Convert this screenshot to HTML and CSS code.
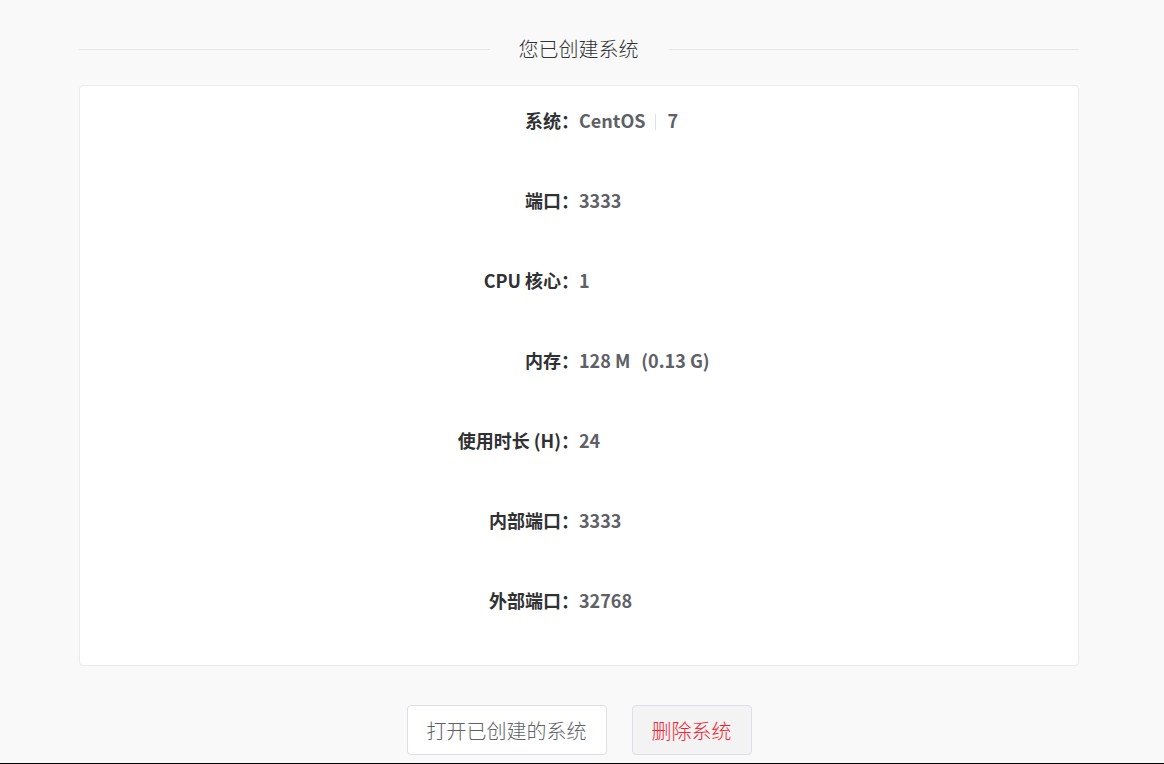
FILE: index.html
```html
<!DOCTYPE html>
<html lang="zh-CN">
<head>
  <meta charset="UTF-8">
  <title>您已创建系统</title>
  <meta name="viewport" content="width=device-width, initial-scale=1.0">
  <link rel="stylesheet" href="styles.css">
</head>
<body>
  <div class="wrap">
    <div class="title-divider">
      <span class="title-text">您已创建系统</span>
    </div>

    <div class="info-card">
      <div class="info-row">
        <span class="info-label">系统：</span>
        <span class="info-value">CentOS<i class="v-divider"></i>7</span>
      </div>
      <div class="info-row">
        <span class="info-label">端口：</span>
        <span class="info-value">3333</span>
      </div>
      <div class="info-row">
        <span class="info-label">CPU 核心：</span>
        <span class="info-value">1</span>
      </div>
      <div class="info-row">
        <span class="info-label">内存：</span>
        <span class="info-value">128 M<span class="sub-value">(0.13 G)</span></span>
      </div>
      <div class="info-row">
        <span class="info-label">使用时长 (H)：</span>
        <span class="info-value">24</span>
      </div>
      <div class="info-row">
        <span class="info-label">内部端口：</span>
        <span class="info-value">3333</span>
      </div>
      <div class="info-row">
        <span class="info-label">外部端口：</span>
        <span class="info-value">32768</span>
      </div>
    </div>

    <div class="actions">
      <button class="btn">打开已创建的系统</button>
      <button class="btn btn-danger">删除系统</button>
    </div>
  </div>
  <div class="footer"></div>
</body>
</html>
```

FILE: styles.css
```css
body {
  margin: 0;
  background-color: #f9f9f9;
  font-family: "Noto Sans CJK SC", "Noto Sans", sans-serif;
  color: #303133;
}

.wrap {
  width: 1000px;
  margin-left: 79px;
}

.title-divider {
  display: flex;
  align-items: center;
  height: 40px;
  margin: 29px 0 16px;
}

.title-divider::before,
.title-divider::after {
  content: "";
  flex: 1;
  height: 1px;
  background-color: #e6e6e6;
}

.title-text {
  padding: 0 30px 0 29px;
  font-size: 20px;
  font-weight: 300;
  line-height: 40px;
  color: #303133;
}

.info-card {
  background-color: #fff;
  border: 1px solid #ebebeb;
  border-radius: 4px;
  padding: 18px 0 1px;
}

.info-row {
  display: grid;
  grid-template-columns: 499px 1fr;
  height: 32px;
  line-height: 32px;
  margin-bottom: 48px;
  font-size: 18px;
  font-weight: bold;
}

.info-label {
  text-align: right;
  color: #303133;
}

.info-value {
  color: #5e6066;
}

.sub-value {
  margin-left: 11px;
}

.v-divider {
  display: inline-block;
  width: 1px;
  height: 16px;
  margin: 0 11px 0 10px;
  vertical-align: -2px;
  background-color: #dcdfe6;
}

.actions {
  display: flex;
  justify-content: center;
  gap: 25px;
  margin-top: 39px;
}

.btn {
  height: 50px;
  padding: 0 19px;
  font-family: inherit;
  font-size: 20px;
  font-weight: 300;
  color: #606266;
  background-color: #fff;
  border: 1px solid #dcdfe6;
  border-radius: 4px;
  cursor: pointer;
}

.btn-danger {
  color: #f5222d;
  background-color: #f3f3f4;
}

.footer {
  height: 1px;
  margin-top: 8px;
  background-color: #000;
}
```
